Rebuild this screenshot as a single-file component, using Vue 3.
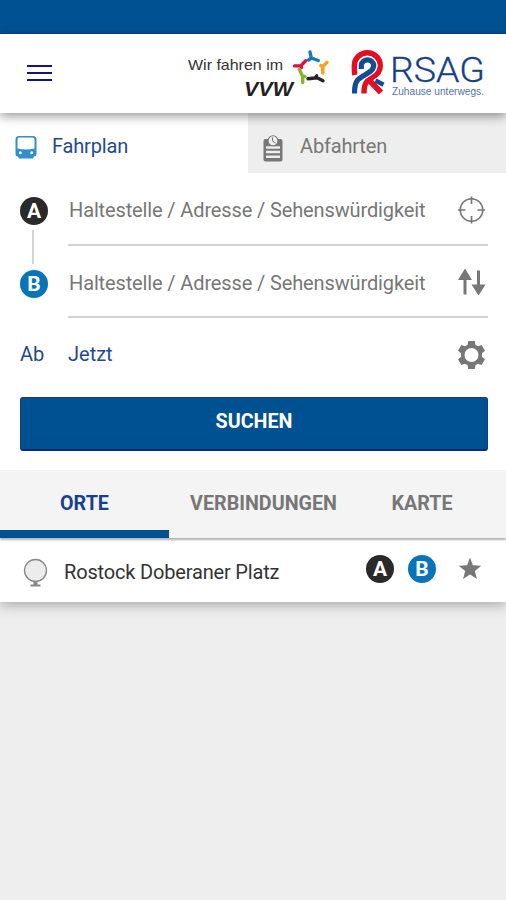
<script setup>
const stops = [
  { id: 'A', icon: 'target' },
  { id: 'B', icon: 'swap' },
]
const placeholder = 'Haltestelle / Adresse / Sehenswürdigkeit'
</script>

<template>
  <div class="screen">
    <div class="status"></div>
    <header class="header">
      <button class="menu" aria-label="Menü"><i></i><i></i><i></i></button>
      <div class="brands">
        <svg class="vvw" width="150" height="60" viewBox="0 0 150 60">
          <text x="4" y="26.500" class="vvw-claim" textLength="95" lengthAdjust="spacingAndGlyphs">Wir fahren im</text>
          <text x="60" y="52.500" class="vvw-name" textLength="49" lengthAdjust="spacingAndGlyphs">VVW</text>
          <g fill="none" stroke-width="3.400" stroke-linecap="round" stroke-linejoin="round">
            <path stroke="#1779bb" d="M126 9L127.300 15L134.300 17.500M127.300 15L124.500 17" />
            <path stroke="#dc143c" d="M110.500 22.900H116.700L121.700 17.800M116.700 22.900L117.500 24.500" />
            <path stroke="#f6a21a" d="M143 19.300L138.800 23.700V30M138.800 23.700L136.800 22.500" />
            <path stroke="#84b829" d="M115.300 26.500L118.700 33.500V39.500M118.700 33.500L121 33.500" />
            <path stroke="#252525" d="M124 35.700L133 34.800L139 37.800M133 34.800L132.500 32.800" />
          </g>
        </svg>
        <svg class="rsag" width="140" height="60" viewBox="0 0 140 60">
          <g fill="none">
            <path stroke="#e30f20" stroke-width="5.400" d="M4.800 32C4.300 29 4.300 26 4.300 22.700A13 13 0 0 1 30.300 22.700C30.300 29 27 32 22 34.500C16 38 14 41 14 50.500" />
            <path stroke="#e30f20" stroke-width="5.800" d="M19 37L31 49.500" />
            <path stroke="#fff" stroke-width="7.400" d="M4.500 50.500C4.500 39 7 36.500 13 33C19 29.500 23.700 27.500 23.700 22A6.300 6.300 0 0 0 11.300 22V25" />
            <path stroke="#124c93" stroke-width="5.200" d="M4.500 50.500C4.500 39 7 36.500 13 33C19 29.500 23.700 27.500 23.700 22A6.300 6.300 0 0 0 11.300 22V26" />
            <path stroke="#124c93" stroke-width="4.500" d="M25.500 37.500L33.500 41.800" />
          </g>
          <text x="40" y="38.500" class="rsag-name" textLength="95" lengthAdjust="spacingAndGlyphs">RSAG</text>
          <text x="42" y="51.500" class="rsag-claim" textLength="92" lengthAdjust="spacingAndGlyphs">Zuhause unterwegs.</text>
        </svg>
      </div>
    </header>

    <nav class="modes">
      <div class="mode active">
        <svg width="22" height="24" viewBox="0 0 22 24">
          <path fill="#2f8fcf" fill-rule="evenodd" d="M4 0H18Q21.500 0 21.500 3.500V18Q21.500 20.500 19 20.500L18 22.500H4L3 20.500Q.5 20.500 .5 18V3.500Q.5 0 4 0ZM4.500 1.600Q2.500 1.600 2.500 3.500V12.500Q11 14.500 19.500 12.500V3.500Q19.500 1.600 17.500 1.600Z" />
          <circle cx="5.300" cy="16.700" r="1.500" fill="#fff" /><circle cx="16.700" cy="16.700" r="1.500" fill="#fff" />
        </svg>
        <span>Fahrplan</span>
      </div>
      <div class="mode">
        <svg width="20" height="27" viewBox="0 0 20 27">
          <rect x=".5" y="4" width="19" height="22.500" rx="2" fill="#777" />
          <path d="M3 12.500H17M3 17H17M3 21.700H17" stroke="#eee" stroke-width="2.500" />
          <circle cx="10" cy="5.800" r="5" fill="#eee" stroke="#777" stroke-width="1.100" />
          <path d="M9.500 2.500V6L12.500 8" fill="none" stroke="#777" />
        </svg>
        <span>Abfahrten</span>
      </div>
    </nav>

    <section class="form">
      <div class="stops">
        <div v-for="stop in stops" :key="stop.id" class="stop">
          <div class="marker"><b class="badge" :class="stop.id">{{ stop.id }}</b></div>
          <div class="field">
            <span class="hint">{{ placeholder }}</span>
            <svg v-if="stop.icon === 'target'" width="30" height="30" viewBox="0 0 30 30" fill="none" stroke="#777">
              <circle cx="14.500" cy="15" r="11.300" stroke-width="1.500" />
              <path d="M14.500 1.500V9M14.500 21V28.500M1 15H8.500M20.500 15H28" stroke-width="1.700" />
            </svg>
            <svg v-else width="30" height="30" viewBox="0 0 30 30" fill="#777">
              <path d="M8 .5L15 12H9.500V26.500H6.500V12H1ZM20 2.500H23V16.500H28.500L21.500 27.500L14.500 16.500H20Z" />
            </svg>
          </div>
        </div>
      </div>
      <div class="time">
        <span class="when">Ab</span><span class="now">Jetzt</span>
        <svg width="30" height="30" viewBox="0 0 30 30">
          <path fill="#777" fill-rule="evenodd" d="M11.200 1H17.800L18.400 4.800L21 6.300L24.700 5L28 10.700L25 13.200V16.800L28 19.300L24.700 25L21 23.700L18.400 25.200L17.800 29H11.200L10.600 25.200L8 23.700L4.300 25L1 19.300L4 16.800V13.200L1 10.700L4.300 5L8 6.300L10.600 4.800ZM14.500 8A7 7 0 1 0 14.500 22A7 7 0 1 0 14.500 8Z" />
        </svg>
      </div>
      <button class="search">SUCHEN</button>
    </section>

    <nav class="tabs">
      <span class="tab selected">ORTE</span>
      <span class="tab connections">VERBINDUNGEN</span>
      <span class="tab">KARTE</span>
    </nav>

    <div class="place">
      <svg class="pin" width="26" height="30" viewBox="0 0 26 30">
        <circle cx="12.500" cy="12.500" r="11" fill="#ececec" stroke="#888" stroke-width="1.300" />
        <path d="M10.500 24H14.500V26.500H17.500V28.500H7.500V26.500H10.500Z" fill="#888" />
      </svg>
      <span class="place-name">Rostock Doberaner Platz</span>
      <b class="badge A">A</b><b class="badge B">B</b>
      <svg class="star" width="24" height="24" viewBox="0 0 24 24">
        <path fill="#777" d="M12 .5L14.900 8.300L23.300 8.700L16.800 13.900L19 22L12 17.400L5 22L7.200 13.900L.7 8.700L9.100 8.300Z" />
      </svg>
    </div>
  </div>
</template>

<style>
body { background: #eee; }
</style>

<style scoped>
.screen { width: 506px; height: 900px; overflow: hidden; background: #eee; font-family: Roboto, sans-serif; font-size: 20px; color: #777; }
svg { display: block; flex: none; }
button { border: 0; padding: 0; font-family: inherit; }
.status { box-sizing: border-box; height: 34px; background: #005192; border-bottom: 1px solid #153b92; }
.header { position: relative; display: flex; justify-content: space-between; align-items: flex-start; height: 79px; background: #fff; box-shadow: 0 3px 10px rgba(0, 0, 0, .42); }
.menu { display: flex; flex-direction: column; gap: 5px; width: 25px; margin: 31px 0 0 27px; background: none; }
.menu i { height: 2px; background: #17137d; }
.brands { display: flex; gap: 16px; padding: 9px 16px 0 0; }
.vvw-claim { font: 14.500px "Liberation Sans", sans-serif; fill: #333; }
.vvw-name { font: italic bold 20px "Liberation Sans", sans-serif; fill: #222; }
.rsag-name { font: 300 35.500px Roboto, sans-serif; fill: #173f89; stroke: #173f89; stroke-width: .3px; }
.rsag-claim { font: 10.500px "Liberation Sans", sans-serif; fill: #5272a8; }
.modes { display: flex; height: 60px; }
.mode { box-sizing: border-box; display: flex; align-items: center; width: 258px; padding: 5px 0 0 15px; gap: 17px; background: #eee; }
.mode svg { margin-top: 5px; }
.mode.active { width: 248px; gap: 15px; background: #fff; color: #1f4a91; }
.mode span { letter-spacing: -.17px; }
.form { height: 297px; background: #fff; }
.stop { display: flex; height: 72.500px; }
.marker { display: flex; flex-direction: column; align-items: center; width: 68px; padding-top: 24px; }
.stop:first-child .marker::after { content: ''; flex: none; width: 2px; height: 34px; margin: 5px 2px 0 0; background: #d3d3d3; }
.badge { display: flex; flex: none; align-items: center; justify-content: center; width: 28px; height: 28px; border-radius: 50%; background: #2a2a2a; color: #fff; font-size: 21px; line-height: 28px; }
.badge.B { background: #0874b9; }
.field { box-sizing: border-box; display: flex; align-items: center; justify-content: space-between; width: 420px; padding: 4px 1px 0 1px; border-bottom: 2px solid #d5d5d5; }
.hint { letter-spacing: -.13px; white-space: nowrap; }
.time { display: flex; align-items: center; height: 70px; padding: 2px 19px 0 20px; color: #1f4a91; }
.time span { padding-bottom: 2px; }
.when { width: 48px; }
.now { flex: 1; }
.search { display: block; width: 468px; height: 54px; margin: 7px 0 0 20px; padding-bottom: 5px; border: 1px solid #183980; border-bottom: 2px solid #13277a; border-radius: 3px; background: #005192; color: #fff; font-size: 19.700px; font-weight: 700; }
.tabs { display: flex; position: relative; height: 68px; background: #f4f4f4; box-shadow: 0 2px 2px rgba(0, 0, 0, .3); font-size: 19.700px; font-weight: 700; }
.tab { box-sizing: border-box; width: 168px; padding-top: 22px; text-align: center; }
.tab.selected { width: 169px; border-bottom: 8px solid #005192; color: #173f91; }
.tab.connections { width: 169px; padding-left: 20px; }
.place { display: flex; align-items: flex-start; box-sizing: border-box; height: 64px; padding: 17px 23px 0; background: #fff; box-shadow: 0 3px 12px rgba(0, 0, 0, .3); color: #333; }
.place-name { flex: 1; padding: 5px 0 0 15px; letter-spacing: -.17px; }
.pin { margin-top: 3px; }
.place .badge.B { margin-left: 14px; }
.star { margin: 2px 1px 0 22px; }
</style>
